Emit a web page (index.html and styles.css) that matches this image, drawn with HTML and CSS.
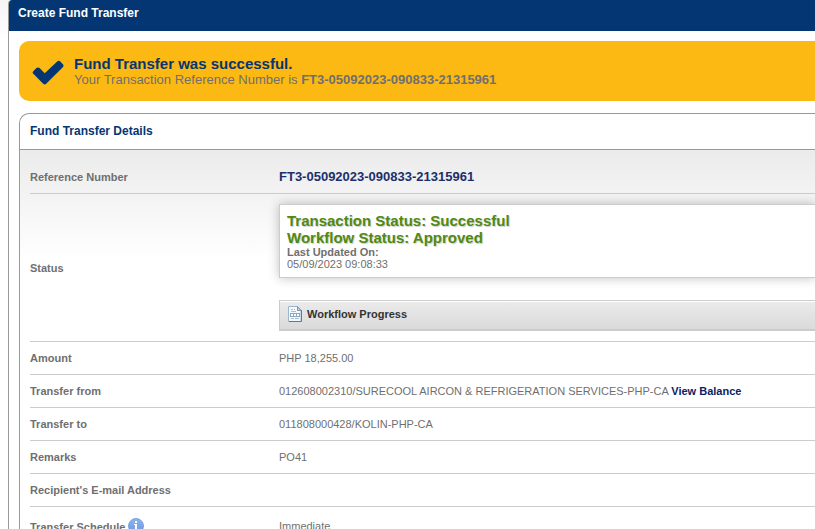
FILE: index.html
```html
<!DOCTYPE html>
<html lang="en">
<head>
    <meta charset="UTF-8">
    <meta name="viewport" content="width=device-width, initial-scale=1.0">
    <title>Create Fund Transfer</title>
    <link rel="stylesheet" href="styles.css">
</head>
<body>

<div class="container">

    <h1 class="page-title">Create Fund Transfer</h1>

    <div class="content">

        <!-- Success message -->
        <div class="message">
            <svg class="check-icon" width="32" height="30" viewBox="0 -4 32 30" aria-hidden="true">
                <path d="M1.3 11.2 L4.4 8.1 Q6 6.7 7.6 8.1 L12.7 13.2 L25.2 1.5 Q26.8 .2 28.3 1.6 L30.9 4.3 Q32.2 5.8 30.8 7.3 L14.2 23.8 Q12.7 25.2 11.2 23.8 L1.3 13.8 Q0 12.5 1.3 11.2 Z" fill="#043673"/>
            </svg>
            <div>
                <h2 class="message-title">Fund Transfer was successful.</h2>
                <p class="message-text">Your Transaction Reference Number is <strong>FT3-05092023-090833-21315961</strong></p>
            </div>
        </div>

        <!-- Transfer details -->
        <div class="details">
            <h2 class="details-title">Fund Transfer Details</h2>
            <div class="details-body">
                <table class="details-table">
                    <tr>
                        <th scope="row">Reference Number</th>
                        <td class="reference">FT3-05092023-090833-21315961</td>
                    </tr>
                    <tr class="status-row">
                        <th scope="row">Status</th>
                        <td>
                            <div class="status-box">
                                <p class="status-text">Transaction Status: Successful</p>
                                <p class="status-text">Workflow Status: Approved</p>
                                <p><strong>Last Updated On:</strong></p>
                                <p>05/09/2023 09:08:33</p>
                            </div>
                            <button type="button" class="workflow-button">
                                <svg width="14" height="16" viewBox="0 0 14 16" aria-hidden="true">
                                    <path d="M.5 .5 H9.5 L13 4 V15.5 H.5 Z" fill="#f3f8fc" stroke="#9db5cb"/>
                                    <path d="M13.5 4 V15.5 H1" fill="none" stroke="#62788f"/>
                                    <path d="M9.5 .5 V4.5 H13 Z" fill="#c3d3e2" stroke="#7f98b0"/>
                                    <path d="M3 3.5 H5 M6 3.5 H7 M3 5.5 H8 M3 12.5 H6 M7 12.5 H11" stroke="#a9bfd2"/>
                                    <rect x="2" y="7" width="10" height="4" fill="#89a8c4"/>
                                    <path d="M3 9 H5 M6 9 H8 M9 9 H11" stroke="#fff" stroke-width="2"/>
                                </svg>
                                Workflow Progress
                            </button>
                        </td>
                    </tr>
                    <tr>
                        <th scope="row">Amount</th>
                        <td>PHP 18,255.00</td>
                    </tr>
                    <tr>
                        <th scope="row">Transfer from</th>
                        <td>012608002310/SURECOOL AIRCON &amp; REFRIGERATION SERVICES-PHP-CA <a href="#">View Balance</a></td>
                    </tr>
                    <tr>
                        <th scope="row">Transfer to</th>
                        <td>011808000428/KOLIN-PHP-CA</td>
                    </tr>
                    <tr>
                        <th scope="row">Remarks</th>
                        <td>PO41</td>
                    </tr>
                    <tr>
                        <th scope="row">Recipient's E-mail Address</th>
                        <td></td>
                    </tr>
                    <tr class="schedule-row">
                        <th scope="row">Transfer Schedule
                            <svg class="info-icon" width="16" height="16" viewBox="0 0 16 16" aria-hidden="true">
                                <defs>
                                    <linearGradient id="infoFill" x1="0" y1="0" x2="0" y2="1">
                                        <stop offset="0" stop-color="#8db5ef"/>
                                        <stop offset="1" stop-color="#6a96e3"/>
                                    </linearGradient>
                                </defs>
                                <circle cx="8" cy="8" r="7.5" fill="url(#infoFill)" stroke="#7d9fe0"/>
                                <path d="M7 3 H9 V5 H7 Z M6 6 H9 V11 H10 V12 H6 V11 H7 V7 H6 Z" fill="#fff"/>
                            </svg>
                        </th>
                        <td>Immediate</td>
                    </tr>
                </table>
            </div>
        </div>

    </div>

</div>

</body>
</html>
```
FILE: styles.css
```css
body {
    font-family: "Liberation Sans", Arial, sans-serif;
    font-size: 11px;
    line-height: 12px;
    color: #6f6f6f;
    background: linear-gradient(#f5f5f5, #fff 40px) no-repeat #fff;
    margin: 0;
    padding-left: 8px;
}

h1, h2, p {
    margin: 0;
}

.container {
    background-color: #fff;
    border-left: 1px solid #999;
    border-top-left-radius: 4px;
    overflow: hidden;
}

.page-title {
    background-color: #043673;
    color: #fff;
    font-size: 12px;
    line-height: 15px;
    padding: 6px 10px 10px;
    margin-left: -1px;
}

.content {
    padding: 10px 0 0 10px;
}

.message {
    display: flex;
    align-items: center;
    gap: 10px;
    background-color: #fdb913;
    border-radius: 10px 0 0 10px;
    padding: 14px 13px;
    margin-bottom: 12px;
}

.message-title {
    color: #043673;
    font-size: 15px;
    line-height: 17px;
}

.message-text {
    font-size: 13px;
    line-height: 15px;
}

.details {
    border: 1px solid #999;
    border-right: none;
    border-radius: 10px 0 0 0;
}

.details-title {
    color: #043673;
    font-size: 12px;
    line-height: 15px;
    padding: 10px;
    border-bottom: 1px solid #999;
}

.details-body {
    background: linear-gradient(#ebebeb, #fff 110px);
    padding: 11px 0 10px 10px;
}

.details-table {
    width: 100%;
    border-spacing: 0;
}

th, td {
    height: 32px;
    padding: 0;
    border-bottom: 1px solid #ccc;
    text-align: left;
    vertical-align: middle;
}

th {
    width: 249px;
}

.reference {
    color: #1c2f6b;
    font-size: 13px;
    font-weight: bold;
}

.status-row td {
    padding: 10px 0;
}

.status-box {
    background-color: #fff;
    border: 1px solid #ccc;
    border-right: none;
    box-shadow: 0 0 10px rgba(0, 0, 0, 0.25);
    padding: 7px;
    margin-bottom: 22px;
}

.status-text {
    color: #4f8a10;
    font-size: 15px;
    font-weight: bold;
    line-height: 17px;
    text-shadow: 1px 1px 1px #ccc;
}

.workflow-button {
    display: flex;
    align-items: center;
    gap: 5px;
    width: 100%;
    padding: 5px 8px 7px;
    background: linear-gradient(#ebebeb, #dadada);
    border: 1px solid #ccc;
    border-right: none;
    border-bottom-width: 2px;
    box-shadow: inset 0 1px #fff;
    color: #333;
    font-family: inherit;
    font-size: 11px;
    font-weight: bold;
    cursor: pointer;
}

a {
    color: #0b2265;
    font-weight: bold;
    text-decoration: none;
}

a:hover {
    text-decoration: underline;
}

.schedule-row th, .schedule-row td {
    height: 38px;
}

.info-icon {
    vertical-align: -3px;
}
```
